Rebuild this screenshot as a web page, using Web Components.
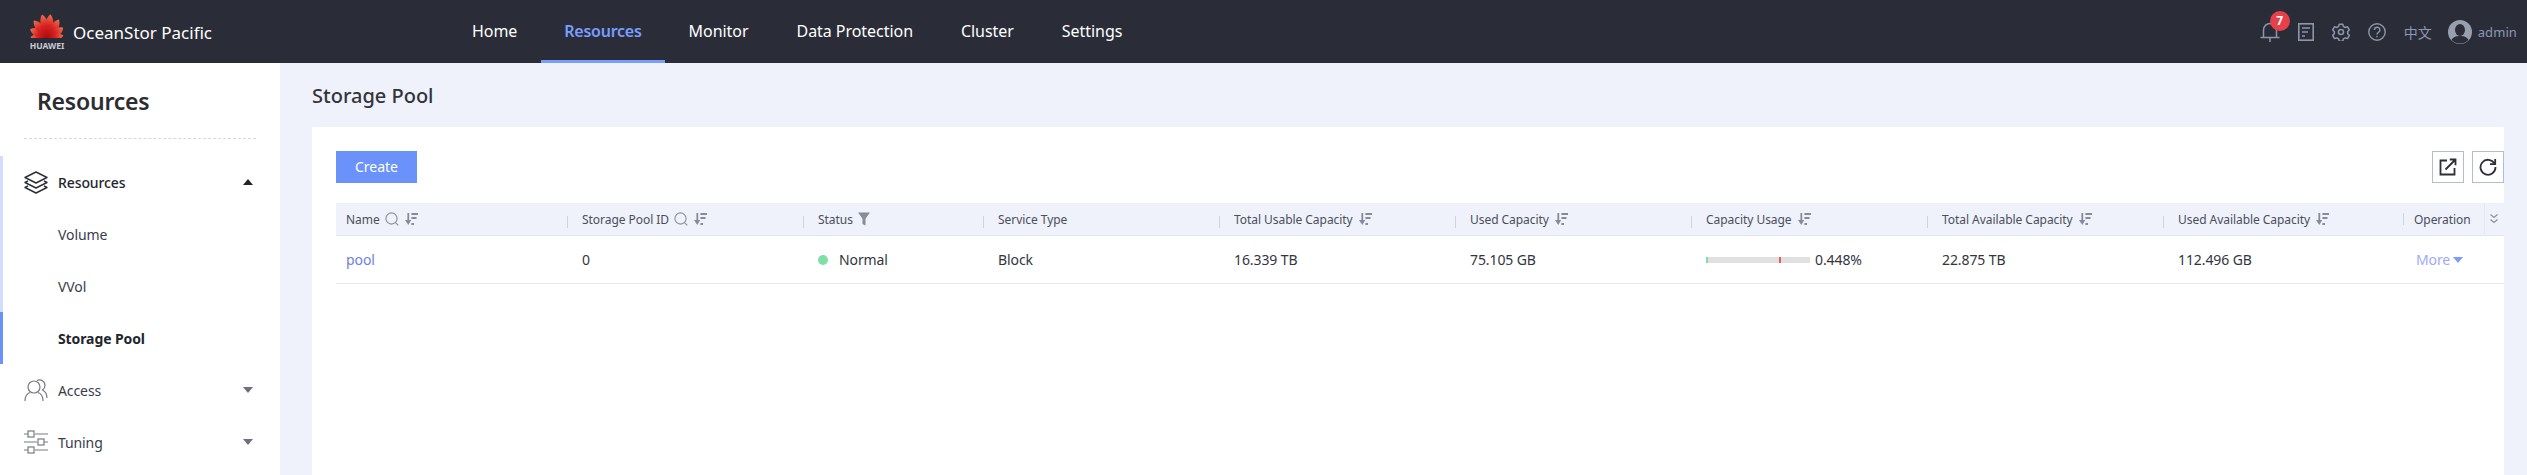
<!DOCTYPE html>
<html>
<head>
<meta charset="utf-8">
<title>Storage Pool</title>
<style>
  html, body { margin: 0; height: 100%; overflow: hidden; }
  body { font-family: "Noto Sans", "Noto Sans CJK SC", sans-serif; background: #eff2fb; }
</style>
</head>
<body>
<app-shell>
  <top-bar slot="top"></top-bar>
  <side-menu slot="side"></side-menu>
  <pool-page></pool-page>
</app-shell>

<script>
const sortIcon = `<svg class="ico" width="14" height="12" viewBox="0 0 14 12" fill="#868a99"><path d="M3.400 0h1.800v7h2L4.300 12 1 7h2.400z"/><path d="M7.400 0H14v2H7.400zM7.400 4H12.500v2H7.400zM7.400 10h2.600v2H7.400z"/></svg>`;
const searchIcon = `<svg class="ico" width="14" height="14" viewBox="0 0 14 14" fill="none" stroke="#8b8f9d" stroke-width="1.100"><circle cx="6.500" cy="6.500" r="5.600"/><path d="M10.500 10.600l2.800 2.800"/></svg>`;
const filterIcon = `<svg class="ico" width="12" height="14" viewBox="0 0 12 14" fill="#868a99"><path d="M0 .5h12L7.500 6.500V13.500L4.500 12V6.500z"/></svg>`;

const logoPetals = [-84, -60, -35, -10, 10, 35, 60, 84].map((a) => {
  const abs = Math.abs(a);
  const len = abs > 70 ? 16.500 : abs > 50 ? 19 : abs > 30 ? 22 : 24;
  const w = abs > 70 ? 4 : 5.200;
  return `<path transform="translate(17 24) rotate(${a})" d="M0 0C-${w} -${len * .35} -${w} -${len * .8} -.800 -${len}C${w} -${len * .8} ${w} -${len * .35} 0 0z"/>`;
}).join('');

class AppShell extends HTMLElement {
  constructor() {
    super();
    this.attachShadow({ mode: 'open' }).innerHTML = `
      <style>
        :host { display: flex; flex-direction: column; height: 475px; overflow: hidden; }
        .body { display: flex; flex: 1; min-height: 0; }
      </style>
      <slot name="top"></slot>
      <div class="body"><slot name="side"></slot><slot></slot></div>`;
  }
}

class TopBar extends HTMLElement {
  constructor() {
    super();
    const nav = ['Home', 'Resources', 'Monitor', 'Data Protection', 'Cluster', 'Settings'];
    this.attachShadow({ mode: 'open' }).innerHTML = `
      <style>
        :host { display: flex; align-items: stretch; height: 63px; background: #2a2d38; color: #fff; flex: none; }
        .brand { width: 448px; flex: none; box-sizing: border-box; padding: 14px 0 0 30px; display: flex; gap: 9px; }
        .mark { width: 34px; display: flex; flex-direction: column; align-items: center; }
        .mark span { font-size: 8.500px; line-height: 9px; font-weight: 700; color: #c9cbd2; margin-top: 3px; }
        .name { font-size: 17px; line-height: 38px; }
        nav { display: flex; }
        nav a { padding: 0 24px; font-size: 16px; line-height: 63px; height: 60px; border-bottom: 3px solid transparent; letter-spacing: -.05px; }
        nav a.on { color: #7b9cff; font-weight: 600; border-bottom-color: #7b9cff; padding: 0 23px; letter-spacing: -.25px; }
        .tools { margin-left: auto; display: flex; align-items: center; padding: 0 10px 0 0; color: #8d97b4; }
        .bell { position: relative; display: flex; margin-right: 18px; }
        .badge { position: absolute; left: 10px; top: -10px; width: 20px; height: 20px; border-radius: 50%; background: #e8404a; color: #fff; font-size: 12px; font-weight: 700; line-height: 20px; text-align: center; }
        .lang { font-size: 14px; margin: 0 16px 0 18px; }
        .user { font-size: 13px; margin-left: 6px; letter-spacing: .1px; }
        svg { display: block; }
      </style>
      <div class="brand">
        <div class="mark">
          <svg width="34" height="24" viewBox="0 0 34 24" fill="url(#pt)">
            <defs><linearGradient id="pt" x1="0" y1="0" x2="0" y2="1"><stop offset="0" stop-color="#ee7152"/><stop offset=".5" stop-color="#d8201f"/><stop offset="1" stop-color="#a80c10"/></linearGradient></defs>
            ${logoPetals}
          </svg>
          <span>HUAWEI</span>
        </div>
        <div class="name">OceanStor Pacific</div>
      </div>
      <nav>${nav.map((n) => `<a class="${n === 'Resources' ? 'on' : ''}">${n}</a>`).join('')}</nav>
      <div class="tools">
        <div class="bell">
          <svg width="20" height="22" viewBox="0 0 20 22" fill="none" stroke="#8e95a8" stroke-width="1.500"><path d="M3.500 16V9a6.500 6.500 0 0 1 13 0v7M.5 16.500h19M10 17v4"/></svg>
          <span class="badge">7</span>
        </div>
        <svg width="16" height="18" viewBox="0 0 16 18" fill="none" stroke="#8e95a8" stroke-width="1.600" style="margin-right:18px"><rect x=".8" y=".8" width="14.400" height="16.400"/><path d="M4 5h8M4 9h6M4 13h3"/></svg>
        <svg width="18" height="18" viewBox="0 0 24 24" fill="none" stroke="#8e95a8" stroke-width="2" style="margin-right:18px"><circle cx="12" cy="12" r="3.400"/><path d="M9.600 1.500h4.800l.7 3 2.600 1.500 3-.9 2.400 4.200-2.200 2.100v3l2.200 2.100-2.400 4.200-3-.9-2.600 1.500-.7 3H9.600l-.7-3-2.600-1.500-3 .9L.9 16.500l2.200-2.100v-3L.9 9.300l2.400-4.200 3 .9 2.600-1.500z" stroke-linejoin="round"/></svg>
        <svg width="18" height="18" viewBox="0 0 18 18" fill="none" stroke="#8e95a8" stroke-width="1.400"><circle cx="9" cy="9" r="8.200"/><path d="M6.400 7a2.700 2.700 0 1 1 4 2.300c-1 .6-1.400 1-1.400 2.200"/><path d="M9 12.800v1.500"/></svg>
        <span class="lang">中文</span>
        <svg width="24" height="24" viewBox="0 0 24 24"><circle cx="12" cy="12" r="12" fill="#9a9fae"/><ellipse cx="12" cy="10" rx="5" ry="6" fill="#2a2d38"/><path d="M3.500 20c2-3.400 5-4 8.500-4s6.500.6 8.500 4A12 12 0 0 1 3.500 20z" fill="#2a2d38"/></svg>
        <span class="user">admin</span>
      </div>`;
  }
}

class MenuRow extends HTMLElement {
  constructor() {
    super();
    this.attachShadow({ mode: 'open' }).innerHTML = `
      <style>
        :host { display: flex; align-items: center; height: 52px; box-sizing: border-box; padding-left: 55px; position: relative; font-size: 14px; letter-spacing: -.1px; color: #3a3d4a; border-left: 3px solid transparent; }
        :host([open]) { font-weight: 500; color: #23252e; }
        :host([bar]) { border-left-color: #d2dcff; }
        :host([active]) { border-left-color: #6b92fb; font-weight: 700; color: #23252e; }
        ::slotted(svg) { position: absolute; left: 21px; top: 14px; }
        .caret { position: absolute; left: 240px; top: 23px; width: 0; height: 0; border-left: 5px solid transparent; border-right: 5px solid transparent; }
        .down { border-top: 6px solid #6d707c; }
        .up { border-bottom: 6px solid #23252e; }
      </style>
      <slot name="icon"></slot><slot></slot><span class="caret"></span>`;
  }
  connectedCallback() {
    const c = this.getAttribute('caret');
    if (c) this.shadowRoot.querySelector('.caret').classList.add(c);
  }
}

class SideMenu extends HTMLElement {
  constructor() {
    super();
    this.attachShadow({ mode: 'open' }).innerHTML = `
      <style>
        :host { display: block; width: 280px; flex: none; background: #fff; overflow: hidden; }
        h1 { margin: 0 24px 17px; padding: 19px 0 17px 13px; height: 39px; line-height: 39px; font-size: 23px; letter-spacing: -.2px; font-weight: 600; color: #2c2d33; border-bottom: 1px dashed #d5d8e6; }
      </style>
      <h1>Resources</h1>
      <menu-row open bar caret="up"><svg slot="icon" width="24" height="24" viewBox="0 0 24 24" fill="none" stroke="#2c2e38" stroke-width="1.400" stroke-linejoin="round"><path d="M12 2l11 5.500L12 13 1 7.500z"/><path d="M4 11L1 12.500 12 18l11-5.500-3-1.500"/><path d="M4 16l-3 1.500L12 23l11-5.500-3-1.500"/></svg>Resources</menu-row>
      <menu-row bar>Volume</menu-row>
      <menu-row bar>VVol</menu-row>
      <menu-row active>Storage Pool</menu-row>
      <menu-row caret="down"><svg slot="icon" width="24" height="24" viewBox="0 0 24 24" fill="none" stroke="#777a86" stroke-width="1.200"><circle cx="10" cy="9" r="6"/><path d="M1 23c0-5 2-7.500 5-8.500M14 14.500c3 1 5 3.500 5 8.500"/><path d="M13 2.500a5.500 5.500 0 0 1 8 5c0 2-1 3.500-2.500 4.500 3 1.500 4.500 4 4.500 8"/></svg>Access</menu-row>
      <menu-row caret="down"><svg slot="icon" width="24" height="24" viewBox="0 0 24 24" fill="none" stroke="#777a86" stroke-width="1.200"><path d="M0 4h4M11 4h13M0 12h13M20 12h4M0 20h4M11 20h13"/><rect x="4" y="1" width="6" height="6"/><rect x="14" y="9" width="6" height="6"/><rect x="4" y="17" width="6" height="6"/></svg>Tuning</menu-row>`;
  }
}

class PoolPage extends HTMLElement {
  constructor() {
    super();
    this.attachShadow({ mode: 'open' }).innerHTML = `
      <style>
        :host { display: flex; flex-direction: column; flex: 1; min-width: 0; box-sizing: border-box; padding: 0 23px 0 32px; }
        h2 { margin: 0; height: 64px; line-height: 66px; font-size: 20px; font-weight: 500; color: #33343b; }
        .card { flex: 1; background: #fff; padding: 24px 0 0 24px; }
        .bar { display: flex; gap: 8px; margin-bottom: 20px; }
        .create { width: 81px; height: 32px; background: #6b92fb; color: #fff; font-size: 14px; line-height: 32px; text-align: center; margin-right: auto; }
        .tool { width: 30px; height: 30px; border: 1px solid #b6bccf; display: flex; align-items: center; justify-content: center; }
      </style>
      <h2>Storage Pool</h2>
      <div class="card">
        <div class="bar">
          <div class="create">Create</div>
          <div class="tool"><svg width="18" height="18" viewBox="0 0 18 18" fill="none" stroke="#2c2e38" stroke-width="1.800"><path d="M8 2.500H1.500v14h14V10"/><path d="M6.500 11.500L16 2M10.800 1.500h5.700v5.700"/></svg></div>
          <div class="tool"><svg width="18" height="18" viewBox="0 0 18 18" fill="none" stroke="#2c2e38" stroke-width="1.800"><path d="M15.500 5.500A7.500 7.500 0 1 0 16.500 9"/><path d="M16.200 1v5.200H11"/></svg></div>
        </div>
        <pool-table></pool-table>
      </div>`;
  }
}

class PoolTable extends HTMLElement {
  constructor() {
    super();
    const head = [
      ['Name', searchIcon + sortIcon],
      ['Storage Pool ID', searchIcon + sortIcon],
      ['Status', filterIcon],
      ['Service Type', ''],
      ['Total Usable Capacity', sortIcon],
      ['Used Capacity', sortIcon],
      ['Capacity Usage', sortIcon],
      ['Total Available Capacity', sortIcon],
      ['Used Available Capacity', sortIcon],
      ['Operation', '']
    ];
    this.attachShadow({ mode: 'open' }).innerHTML = `
      <style>
        :host { display: grid; grid-template-columns: 236px 236px 180px 236px 236px 236px 236px 236px 236px 80px 20px; }
        .h { height: 32px; display: flex; align-items: center; gap: 5px; padding-left: 10px; background: #eff2fb linear-gradient(#cfd3df, #cfd3df) no-repeat right 4px top 13px / 1px 12px; border-bottom: 1px solid #e0e4f0; font-size: 12px; letter-spacing: -.05px; color: #4b4e5c; white-space: nowrap; }
        .h.op { background: #eff2fb; }
        .h.last { background-position: right 0 top 10px; }
        .h.more { background: #eff2fb; border-left: 1px solid #e4e7f2; padding: 0 0 0 3px; gap: 0; }
        .d { height: 47px; display: flex; align-items: center; padding-left: 10px; border-bottom: 1px solid #e6e8f2; font-size: 14px; letter-spacing: -.1px; color: #33353f; white-space: nowrap; }
        .ico { display: block; flex: none; }
        .pool { color: #6f80e6; }
        .dot { width: 10px; height: 10px; border-radius: 50%; background: #7fe0a5; margin: 0 11px 0 0; }
        .track { width: 104px; height: 6px; background: #e0e0e0; margin-right: 5px; display: flex; }
        .track i { display: block; height: 100%; }
        .more-link { color: #9fa9fb; display: flex; align-items: center; gap: 3px; padding-left: 2px; }
        .more-link::after { content: ""; border-left: 5px solid transparent; border-right: 5px solid transparent; border-top: 6px solid #7b9cff; }
      </style>
      ${head.map(([t, ic], i) => `<div class="h ${i === 8 ? 'last' : ''} ${i === 9 ? 'op' : ''}">${t}${ic}</div>`).join('')}
      <div class="h more"><svg width="12" height="12" viewBox="0 0 12 12" fill="none" stroke="#8b8f9d" stroke-width="1.200"><path d="M2.500 1.500L6 4.500l3.500-3M2.500 6.500L6 9.500l3.500-3"/></svg></div>
      <div class="d pool">pool</div>
      <div class="d">0</div>
      <div class="d"><span class="dot"></span>Normal</div>
      <div class="d">Block</div>
      <div class="d">16.339 TB</div>
      <div class="d">75.105 GB</div>
      <div class="d"><div class="track"><i style="width:2px;background:#7fe0a5"></i><i style="width:71px"></i><i style="width:2px;background:#f0565c"></i></div>0.448%</div>
      <div class="d">22.875 TB</div>
      <div class="d">112.496 GB</div>
      <div class="d"><span class="more-link">More</span></div>
      <div class="d"></div>`;
  }
}

customElements.define('app-shell', AppShell);
customElements.define('top-bar', TopBar);
customElements.define('menu-row', MenuRow);
customElements.define('side-menu', SideMenu);
customElements.define('pool-page', PoolPage);
customElements.define('pool-table', PoolTable);
</script>
</body>
</html>
